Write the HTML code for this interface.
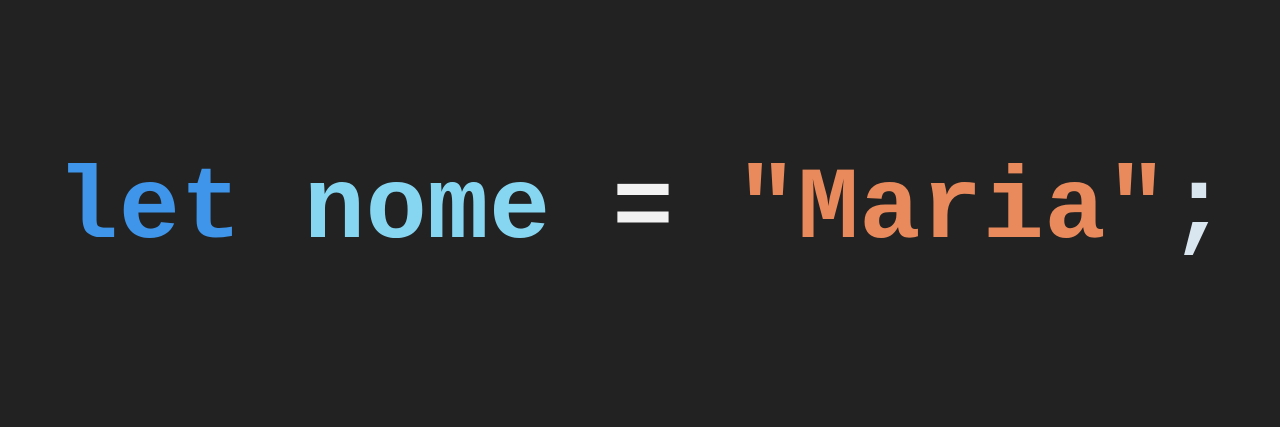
<!DOCTYPE html>
<html><head><meta charset="utf-8"><style>
html,body{margin:0;padding:0;width:1280px;height:427px;background:#222222;overflow:hidden}
.code{position:absolute;left:57px;top:145px;font-family:"Liberation Mono",monospace;font-size:102px;line-height:130px;white-space:pre;font-weight:bold;letter-spacing:0.5px}
.k{color:#3f95ea}.v{color:#86d6f2}.o{color:#f2f2f2}.s{color:#e98a5c}.p{color:#d9e6f0}
</style></head><body>
<div class="code"><span class="k">let</span> <span class="v">nome</span> <span class="o">=</span> <span class="s">"Maria"</span><span class="p">;</span></div>
</body></html>
